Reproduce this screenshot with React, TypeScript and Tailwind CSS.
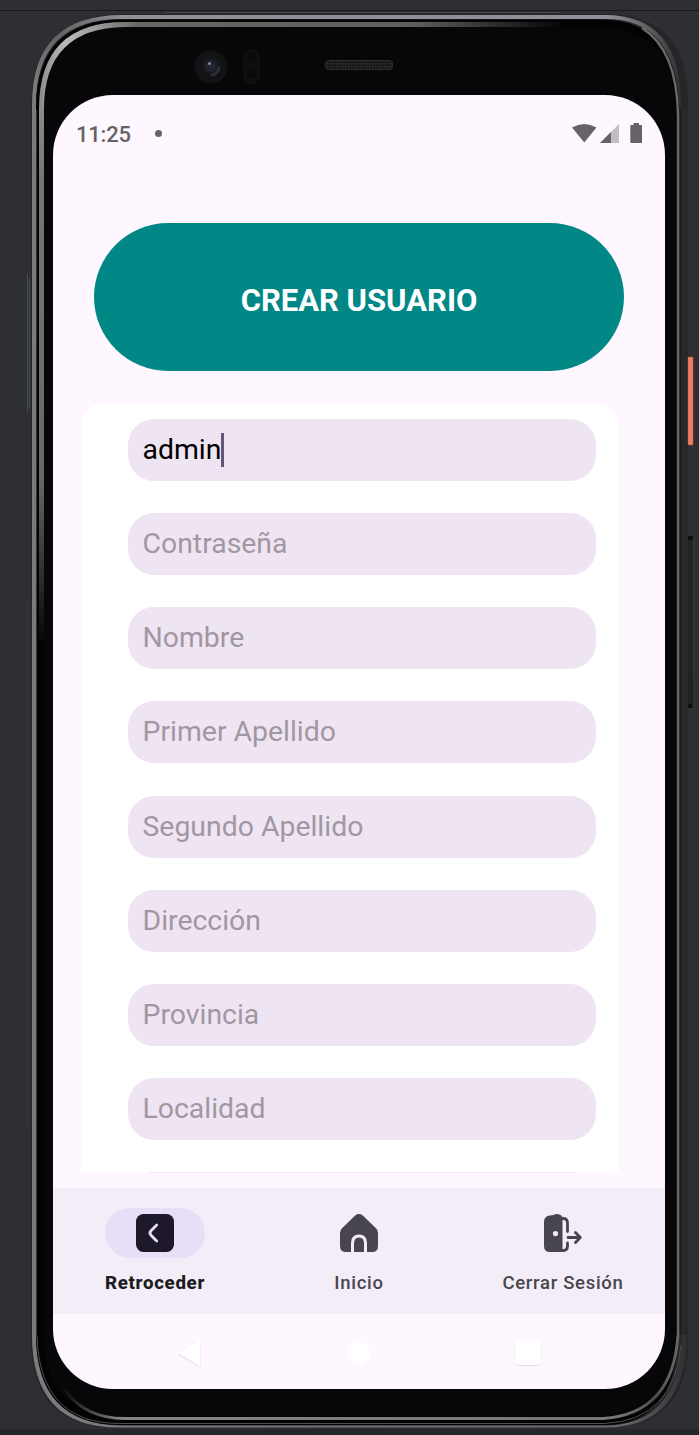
import React from "react";

const placeholders = [
  "Contraseña",
  "Nombre",
  "Primer Apellido",
  "Segundo Apellido",
  "Dirección",
  "Provincia",
  "Localidad",
];

function PhoneFrame() {
  return (
    <svg className="absolute inset-0" width="699" height="1435" viewBox="0 0 699 1435" fill="none" aria-hidden="true">
      <defs>
        <linearGradient id="outer" x1="32" y1="0" x2="688" y2="0" gradientUnits="userSpaceOnUse">
          <stop offset="0" stopColor="#7b7c7f" />
          <stop offset="0.04" stopColor="#626365" />
          <stop offset="0.14" stopColor="#918e95" />
          <stop offset="0.88" stopColor="#918e95" />
          <stop offset="0.95" stopColor="#555658" />
          <stop offset="1" stopColor="#242628" />
        </linearGradient>
        <linearGradient id="innerTop" x1="40" y1="0" x2="560" y2="0" gradientUnits="userSpaceOnUse">
          <stop offset="0" stopColor="#8b8d8b" />
          <stop offset="0.05" stopColor="#b9bbb8" />
          <stop offset="0.12" stopColor="#929492" />
          <stop offset="0.19" stopColor="#666866" />
          <stop offset="0.72" stopColor="#5d5e5d" />
          <stop offset="1" stopColor="#070709" />
        </linearGradient>
        <linearGradient id="innerLeft" x1="0" y1="100" x2="0" y2="640" gradientUnits="userSpaceOnUse">
          <stop offset="0" stopColor="#8d8f8d" />
          <stop offset="0.15" stopColor="#747575" />
          <stop offset="0.7" stopColor="#676868" />
          <stop offset="1" stopColor="#080809" />
        </linearGradient>
        <linearGradient id="bottomFade" x1="65" y1="0" x2="678" y2="0" gradientUnits="userSpaceOnUse">
          <stop offset="0" stopColor="#101012" />
          <stop offset="0.09" stopColor="#858585" />
          <stop offset="0.9" stopColor="#777777" />
          <stop offset="0.96" stopColor="#4c4d4d" />
          <stop offset="1" stopColor="#666767" />
        </linearGradient>
        <linearGradient id="bottomEdge" x1="32" y1="0" x2="688" y2="0" gradientUnits="userSpaceOnUse">
          <stop offset="0" stopColor="#7b7c7f" />
          <stop offset="0.9" stopColor="#68696b" />
          <stop offset="1" stopColor="#2c2e30" />
        </linearGradient>
        <pattern id="mesh" width="3" height="3" patternUnits="userSpaceOnUse">
          <rect width="3" height="3" fill="#171717" />
          <rect width="1.4" height="1.4" fill="#383838" />
        </pattern>
        <radialGradient id="lens">
          <stop offset="0" stopColor="#22283a" />
          <stop offset="0.4" stopColor="#20242f" />
          <stop offset="0.7" stopColor="#191a1d" />
          <stop offset="1" stopColor="#111214" />
        </radialGradient>
      </defs>
      <path d="M0 10.5H699" stroke="#18191b" />
      <rect y="1429" width="699" height="6" fill="#25272a" />
      <path d="M163 12.500H560" stroke="#414246" />
      <path d="M27.5 274V413M29.5 278V408" stroke="#55575a" strokeWidth="0.7" />
      <path d="M27.500 600V1130" stroke="#3a3b3e" strokeWidth="0.7" />
      <path d="M31 110Q31 14 122 14H605Q688 14 688 100V1340Q688 1428 605 1428H118Q31 1428 31 1340Z" fill="#242628" />
      <path d="M34 1335V105Q34 17 122 17H605Q679 17 679 105" stroke="url(#outer)" strokeWidth="4" />
      <path d="M32 1335Q32 1427.500 118 1427.500H605Q686 1427.500 687 1335H682Q679 1425.500 605 1425.500H120Q37 1424 36 1335Z" fill="url(#bottomEdge)" />
      <path d="M36 108Q36 19.500 124 19.500H604Q677 22 679 108V1335Q675 1425 604 1425H120Q36 1424 36 1335Z" fill="#030304" />
      <path d="M44 108Q44 27 125 27H602Q673 29 676 108V1335Q673 1416 603 1416H123Q44 1416 44 1335Z" fill="#070709" />
      <path d="M41.500 640V108" stroke="url(#innerLeft)" strokeWidth="5" />
      <path d="M39 109Q39 22 125 22H560V27H125Q44 28 44 109Z" fill="url(#innerTop)" />
      <path d="M36.500 110V1335" stroke="#353638" />
      <path d="M678 1335V115Q677 50 642 28" stroke="#686969" strokeWidth="2.400" />
      <path d="M680.500 1335V110" stroke="#1a1b1c" />
      <path d="M684.500 1335V110" stroke="#28292a" strokeWidth="4" />
      <path d="M65 1390Q85 1418.500 125 1418.500H603Q673 1414 678 1335" stroke="url(#bottomFade)" strokeWidth="3" />
      <path d="M37 1335Q39 1423.500 120 1423.500H605Q674 1420 681 1345" stroke="#4d4e50" />
      <circle cx="211" cy="67" r="16.5" fill="#121315" />
      <circle cx="211" cy="66" r="10" fill="url(#lens)" />
      <path d="M211 75A8 8 0 0 0 219 66" stroke="#2b2e36" strokeWidth="3" />
      <circle cx="209.500" cy="63.5" r="1.5" fill="#85899a" />
      <rect x="244" y="50" width="15" height="33" rx="7" fill="#0e0e10" stroke="#151517" />
      <circle cx="251.5" cy="56.5" r="5" fill="#09090b" stroke="#131315" />
      <circle cx="251.5" cy="74.5" r="5" fill="#09090b" stroke="#131315" />
      <rect x="325.5" y="60.5" width="67" height="9" rx="3" fill="url(#mesh)" stroke="#2e2e2e" />
      <rect x="688" y="357" width="5" height="88" rx="1" fill="#ee7d66" stroke="#cf563e" strokeWidth="0.5" />
      <path d="M688 536H693V708H688" fill="#202224" />
      <path d="M688 538H693M688 706H692" stroke="#0d0e0f" strokeWidth="4" />
      <path d="M693.5 538V675" stroke="#37393b" />
    </svg>
  );
}

function StatusBar() {
  return (
    <div className="flex h-[78px] shrink-0 items-center justify-between pl-[23px] pr-[22px] text-[#666366]">
      <div className="flex items-center">
        <span className="w-[79px] pt-[2px] text-[22px] leading-none font-medium tracking-[-0.200px]">11:25</span>
        <span className="-mt-[1px] size-[7px] rounded-full bg-current" />
      </div>
      <svg width="72" height="22" viewBox="571 123 72 22">
        <path d="M572 127.5Q584 120.5 596.5 127.5L584.3 142.5Z" fill="#666366" />
        <path d="M619 124V143H600Z" fill="#c3bec4" />
        <path d="M611 132V143H600Z" fill="#666366" />
        <path d="M633.5 123H639V125H641Q642 125 642 126V142Q642 143 641 143H631.300Q630.300 143 630.300 142V126Q630.300 125 631.300 125H633.500Z" fill="#666366" />
      </svg>
    </div>
  );
}

function BackIcon() {
  return (
    <svg width="38" height="38" viewBox="0 0 38 38" fill="none">
      <rect width="38" height="38" rx="7.500" fill="#1d192b" />
      <path d="M20.700 11L15 16.700Q12.900 19 15 21.300L20.700 27" stroke="#e8def8" strokeWidth="2.800" strokeLinecap="round" strokeLinejoin="round" />
    </svg>
  );
}

function HomeIcon() {
  return (
    <svg width="38" height="38" viewBox="0 0 38 38" fill="none">
      <path d="M15.200 1.400Q19-1.300 22.800 1.400L36 14.200Q38 16 38 19V32Q38 38 32 38H27V29Q27 20.500 19 20.500Q11 20.500 11 29V38H6Q0 38 0 32V19Q0 16 2 14.200Z" fill="#49454f" />
      <path d="M14 38V29.500Q14 23.500 19 23.500Q24 23.500 24 29.500V38Z" fill="#49454f" />
    </svg>
  );
}

function LogoutIcon() {
  return (
    <svg width="38" height="38" viewBox="0 0 38 38" fill="none">
      <path fillRule="evenodd" d="M0 8Q0 2 6 1.500L9.500 .9Q12-.2 14.500 .2Q17.500 .7 18.500 3V38H6Q0 38 0 32ZM11.500 17A2.600 2.600 0 1 0 11.500 22.200A2.600 2.600 0 1 0 11.500 17Z" fill="#49454f" />
      <path d="M17 4.500H19Q23.500 4.500 23.500 9V17.500M17 36.500H19Q23.500 36.500 23.500 32V29M24 23.500H36M31.500 18.500L36.300 23.500L31.500 28.500" stroke="#49454f" strokeWidth="2.800" strokeLinecap="round" strokeLinejoin="round" />
    </svg>
  );
}

function NavItem({ label, icon, active = false }: { label: string; icon: React.ReactNode; active?: boolean }) {
  return (
    <button className="flex w-[204px] flex-col items-center pt-5">
      <span className={active ? "flex h-[50px] w-[100px] items-center justify-center rounded-full bg-[#e8def8]" : "flex h-[50px] w-[100px] items-center justify-center"}>
        {icon}
      </span>
      <span className={active ? "mt-[14px] text-[18.700px] leading-[22px] font-extrabold tracking-[0.680px] whitespace-nowrap text-[#1d1b20]" : "mt-[14px] text-[18.500px] leading-[22px] font-medium tracking-[0.700px] whitespace-nowrap text-[#49454f]"}>
        {label}
      </span>
    </button>
  );
}

const fieldClass =
  "flex h-[62px] w-[468px] shrink-0 items-center rounded-[26px] bg-[#efe5f2] px-[14.500px] pb-[1px] text-[28.400px] leading-none placeholder:text-[#a097a3] outline-none";

export default function App() {
  return (
    <main className="relative h-[1435px] w-[699px] overflow-hidden bg-[#2d2f32] font-['Roboto',sans-serif]">
      <PhoneFrame />
      <div className="relative pt-[95px] pl-[53px]">
        <section className="flex h-[1294px] w-[612px] flex-col overflow-hidden rounded-[60px] bg-[#fef7ff]">
          <StatusBar />
          <h1 className="mt-[50px] ml-[41px] flex h-[148px] w-[530px] shrink-0 items-center justify-center rounded-full bg-[#018786] pt-[8px] text-[31px] font-bold text-white">
            CREAR USUARIO
          </h1>
          <form className="mt-8 ml-7 flex h-[770px] w-[538px] shrink-0 flex-col gap-[32.140px] overflow-hidden rounded-t-[24px] bg-white pt-4 pl-[47px]">
            <div className={fieldClass}>
              <span className="pt-[2px] text-black">admin</span>
              <span className="h-[34px] w-[3px] bg-[#655579]" />
            </div>
            {placeholders.map((text) => (
              <input key={text} className={fieldClass} placeholder={text} />
            ))}
            <div className={fieldClass} />
          </form>
          <nav className="mt-[15px] flex h-[126px] shrink-0 bg-[#f3edf7]">
            <NavItem label="Retroceder" icon={<BackIcon />} active />
            <NavItem label="Inicio" icon={<HomeIcon />} />
            <NavItem label="Cerrar Sesión" icon={<LogoutIcon />} />
          </nav>
          <div className="flex h-[75px] items-center justify-between pt-[2px] pr-[125px] pl-[123px]">
            <svg className="drop-shadow-[0_1px_1px_rgba(0,0,0,0.12)]" width="26" height="28" viewBox="0 0 26 28"><path d="M24 1V27L2 14Z" fill="white" /></svg>
            <span className="size-[22px] rounded-full bg-white" />
            <span className="size-6 rounded-[3px] bg-white shadow-[0_1px_1px_rgba(0,0,0,0.12)]" />
          </div>
        </section>
      </div>
    </main>
  );
}
